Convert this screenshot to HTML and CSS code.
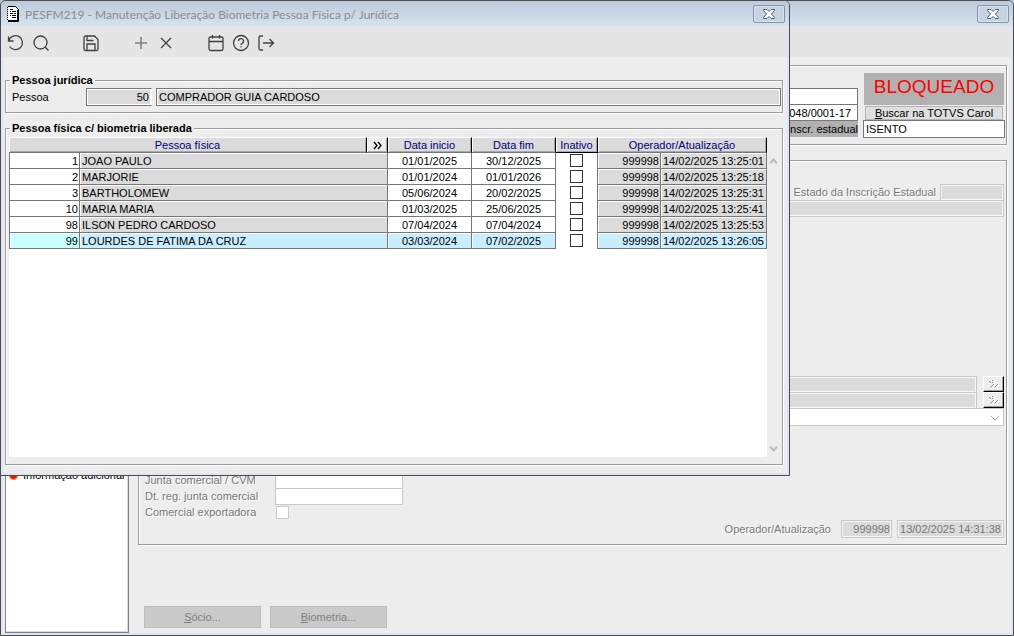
FILE: index.html
```html
<!DOCTYPE html>
<html lang="pt-BR">
<head>
  <meta charset="UTF-8">
  <title>PESFM219 - Manutenção Liberação Biometria Pessoa Física p/ Jurídica</title>
  <link rel="stylesheet" href="styles.css">
</head>
<body>

  <!-- Cadastro de pessoa (janela de fundo) -->
  <div class="window main-window">
    <div class="titlebar">
      <button class="close" type="button" aria-label="Fechar cadastro">
        <svg width="12" height="10" viewBox="0 0 12 10"><path d="M.5.5h3.500L6 2.500l2-2h3.500v1L8.500 5l3 3.500v1H8l-2-2-2 2H.5v-1L3.500 5l-3-3.500z" fill="#fff" stroke="#5c616b"/></svg>
      </button>
    </div>
    <div class="toolbar"></div>
    <div class="main-body">
      <nav class="sidebar">
        <a class="nav-item" href="#"><span class="dot"></span>Informação adicional</a>
      </nav>
      <form class="main-form">
        <fieldset class="group header-group">
          <div class="doc-col">
            <input type="text" class="field" aria-label="Nome">
            <input type="text" class="field cnpj" aria-label="CNPJ" value="048/0001-17">
            <label class="tag" for="inscr">Inscr. estadual</label>
          </div>
          <div class="status-col">
            <div class="status">BLOQUEADO</div>
            <button type="button" class="carol"><u>B</u>uscar na TOTVS Carol</button>
            <input type="text" class="field tall" id="inscr" value="ISENTO">
          </div>
        </fieldset>

        <fieldset class="group detail-group">
          <div class="row state-row">
            <label for="estado">Estado da Inscrição Estadual</label>
            <input type="text" class="field off" id="estado" disabled>
          </div>
          <input type="text" class="field off" aria-label="Descrição do estado" disabled>
          <div class="spacer"></div>
          <div class="lookup">
            <input type="text" class="field off" aria-label="Atividade principal" disabled>
            <button type="button" class="pick" aria-label="Pesquisar atividade principal">
              <svg width="12" height="9" viewBox="0 0 12 9"><path d="M1 1.500h1M2 2.500h1M4 .500h1M4 2.500h1M2.500 7.500l3.500-3.500M6.500 7.500L10 4" stroke="#8a8a8a" fill="none"/><path d="M4 8l3.500-3.500M8 8l3.500-3.500" stroke="#fff" fill="none"/></svg>
            </button>
          </div>
          <div class="lookup">
            <input type="text" class="field off" aria-label="Atividade secundária" disabled>
            <button type="button" class="pick" aria-label="Pesquisar atividade secundária">
              <svg width="12" height="9" viewBox="0 0 12 9"><path d="M1 1.500h1M2 2.500h1M4 .500h1M4 2.500h1M2.500 7.500l3.500-3.500M6.500 7.500L10 4" stroke="#8a8a8a" fill="none"/><path d="M4 8l3.500-3.500M8 8l3.500-3.500" stroke="#fff" fill="none"/></svg>
            </button>
          </div>
          <div class="select-wrap">
            <select class="combo" aria-label="Regime" disabled><option></option></select>
            <svg class="chevron" width="10" height="6" viewBox="0 0 10 6"><path d="M1 1l4 4 4-4" fill="none" stroke="#adadad"/></svg>
          </div>
          <div class="trade">
            <div class="row"><label for="cvm">Junta comercial / CVM</label><input type="text" class="field white" id="cvm" disabled></div>
            <div class="row"><label for="dtreg">Dt. reg. junta comercial</label><input type="text" class="field white" id="dtreg" disabled></div>
            <div class="row"><label for="export">Comercial exportadora</label><input type="checkbox" class="check pale" id="export" disabled></div>
          </div>
          <div class="operator">
            <label for="oper">Operador/Atualização</label>
            <input type="text" class="field off oper-id" id="oper" value="999998" disabled>
            <input type="text" class="field off oper-date" aria-label="Data de atualização" value="13/02/2025 14:31:38" disabled>
          </div>
        </fieldset>

        <div class="actions">
          <button type="button" disabled><u>S</u>ócio...</button>
          <button type="button" disabled><u>B</u>iometria...</button>
        </div>
      </form>
    </div>
  </div>

  <!-- PESFM219 -->
  <div class="window dialog">
    <div class="titlebar">
      <svg class="app-icon" width="12" height="16" viewBox="0 0 12 16">
        <path d="M1 1h7l3 3v11H1z" fill="#fff"/>
        <path d="M.5 1v14" fill="none" stroke="#000" stroke-dasharray="1 1"/>
        <path d="M1 .5h7.500l3 3v12H1" fill="none" stroke="#000"/>
        <path d="M3 3.500h3M3 5.500h1M5 5.500h4M3 7.500h3M7 7.500h2M3 9.500h1M5 9.500h4M5 11.500h4" stroke="#000"/>
        <path d="M10.500 4v12M1 14.500h10" stroke="#000"/>
      </svg>
      <h1>PESFM219 - Manutenção Liberação Biometria Pessoa Física p/ Jurídica</h1>
      <button class="close" type="button" aria-label="Fechar">
        <svg width="12" height="10" viewBox="0 0 12 10"><path d="M.5.5h3.500L6 2.500l2-2h3.500v1L8.500 5l3 3.500v1H8l-2-2-2 2H.5v-1L3.500 5l-3-3.500z" fill="#fff" stroke="#5c616b"/></svg>
      </button>
    </div>

    <div class="toolbar">
      <button type="button" aria-label="Desfazer">
        <svg viewBox="0 0 18 18"><path d="M1.500 2.500v4.500h5M1.800 6.500A7 7 0 1 1 2.600 12.500"/></svg>
      </button>
      <button type="button" aria-label="Pesquisar">
        <svg viewBox="0 0 18 18"><circle cx="8.500" cy="8.500" r="6.500"/><path d="M13.300 13.300L16.500 16.500"/></svg>
      </button>
      <button type="button" class="after-gap" aria-label="Salvar">
        <svg viewBox="0 0 18 18"><path d="M3 2h9.500l3.500 3.500V15a1.500 1.500 0 0 1-1.500 1.500H3.500A1.500 1.500 0 0 1 2 15V3.500A1.500 1.500 0 0 1 3.500 2zM5 2v4.500h6.500M5 16.500V10h8v6.500"/></svg>
      </button>
      <button type="button" class="after-gap dim" aria-label="Incluir">
        <svg viewBox="0 0 18 18"><path d="M9 3v12M3 9h12"/></svg>
      </button>
      <button type="button" aria-label="Excluir">
        <svg viewBox="0 0 18 18"><path d="M4 4l10 10M14 4L4 14"/></svg>
      </button>
      <button type="button" class="after-gap" aria-label="Calendário">
        <svg viewBox="0 0 18 18"><path d="M3.500 3h11A1.500 1.500 0 0 1 16 4.500V15a1.500 1.500 0 0 1-1.500 1.500h-11A1.500 1.500 0 0 1 2 15V4.500A1.500 1.500 0 0 1 3.500 3zM2 7.500h14M5.500 1v3.500M12.500 1v3.500"/></svg>
      </button>
      <button type="button" aria-label="Ajuda">
        <svg viewBox="0 0 18 18"><circle cx="9" cy="9" r="7.500"/><path d="M6.500 7a2.500 2.500 0 1 1 3.600 2.300Q9 9.800 9 11M9 12.300v1.300"/></svg>
      </button>
      <button type="button" aria-label="Sair">
        <svg viewBox="0 0 18 18"><path d="M6 2H3.500A1.500 1.500 0 0 0 2 3.500v11A1.500 1.500 0 0 0 3.500 16H6M6 9h10.500M12.500 5l4 4-4 4"/></svg>
      </button>
    </div>

    <div class="dialog-body">
      <fieldset class="group person-group">
        <legend>Pessoa jurídica</legend>
        <div class="person-row">
          <label for="pessoa">Pessoa</label>
          <input type="text" class="field grey code" id="pessoa" value="50" readonly>
          <input type="text" class="field grey name" aria-label="Nome da pessoa jurídica" value="COMPRADOR GUIA CARDOSO" readonly>
        </div>
      </fieldset>

      <fieldset class="group list-group">
        <legend>Pessoa física c/ biometria liberada</legend>
        <div class="list">
          <div class="sheet">
            <table>
              <colgroup>
                <col class="c-id"><col><col class="c-more"><col class="c-date"><col class="c-date"><col class="c-off"><col class="c-oper"><col class="c-stamp">
              </colgroup>
              <thead>
                <tr>
                  <th colspan="2">Pessoa física</th>
                  <th class="more"><button type="button" aria-label="Mais dados"><svg width="9" height="9" viewBox="0 0 9 9"><path d="M1 1l3 3.500-3 3.500M5 1l3 3.500-3 3.500" fill="none" stroke="#000" stroke-width="1.300"/></svg></button></th>
                  <th>Data inicio</th>
                  <th>Data fim</th>
                  <th class="off-head">Inativo</th>
                  <th colspan="2">Operador/Atualização</th>
                </tr>
              </thead>
              <tbody>
                <tr><td class="num">1</td><td class="ro" colspan="2">JOAO PAULO</td><td class="date">01/01/2025</td><td class="date">30/12/2025</td><td class="tick"><input type="checkbox" class="check" aria-label="Inativo 1"></td><td class="ro num">999998</td><td class="ro">14/02/2025 13:25:01</td></tr>
                <tr><td class="num">2</td><td class="ro" colspan="2">MARJORIE</td><td class="date">01/01/2024</td><td class="date">01/01/2026</td><td class="tick"><input type="checkbox" class="check" aria-label="Inativo 2"></td><td class="ro num">999998</td><td class="ro">14/02/2025 13:25:18</td></tr>
                <tr><td class="num">3</td><td class="ro" colspan="2">BARTHOLOMEW</td><td class="date">05/06/2024</td><td class="date">20/02/2025</td><td class="tick"><input type="checkbox" class="check" aria-label="Inativo 3"></td><td class="ro num">999998</td><td class="ro">14/02/2025 13:25:31</td></tr>
                <tr><td class="num">10</td><td class="ro" colspan="2">MARIA MARIA</td><td class="date">01/03/2025</td><td class="date">25/06/2025</td><td class="tick"><input type="checkbox" class="check" aria-label="Inativo 10"></td><td class="ro num">999998</td><td class="ro">14/02/2025 13:25:41</td></tr>
                <tr><td class="num">98</td><td class="ro" colspan="2">ILSON PEDRO CARDOSO</td><td class="date">07/04/2024</td><td class="date">07/04/2024</td><td class="tick"><input type="checkbox" class="check" aria-label="Inativo 98"></td><td class="ro num">999998</td><td class="ro">14/02/2025 13:25:53</td></tr>
                <tr class="selected"><td class="num">99</td><td class="ro" colspan="2">LOURDES DE FATIMA DA CRUZ</td><td class="date">03/03/2024</td><td class="date">07/02/2025</td><td class="tick"><input type="checkbox" class="check" aria-label="Inativo 99"></td><td class="ro num">999998</td><td class="ro">14/02/2025 13:26:05</td></tr>
              </tbody>
            </table>
          </div>
          <div class="scroll">
            <svg width="9" height="7" viewBox="0 0 9 7"><path d="M1 5.500l3.500-4 3.500 4" fill="none" stroke="#bcbcbc" stroke-width="2"/></svg>
            <svg width="9" height="7" viewBox="0 0 9 7"><path d="M1 1.500l3.500 4 3.500-4" fill="none" stroke="#bcbcbc" stroke-width="2"/></svg>
          </div>
        </div>
      </fieldset>
    </div>
  </div>

</body>
</html>
```
FILE: styles.css
```css
* {
  box-sizing: border-box;
}
body {
  margin: 0;
  height: 100vh;
  overflow: hidden;
  background: #b9c6d6;
  font-family: "Liberation Sans", Arial, sans-serif;
  font-size: 11px;
  line-height: 15px;
  color: #000;
}
button, input, select {
  font: inherit;
  color: inherit;
  margin: 0;
  padding: 0;
  border-radius: 0;
}

/* windows */
.window {
  display: flex;
  flex-direction: column;
  background: #ededed;
  border: 1px solid #4b4b50;
  border-radius: 6px 6px 0 0;
  overflow: hidden;
  box-shadow: inset 0 0 0 2px #dfe6f1;
}
.main-window {
  height: 100vh;
}
.dialog {
  position: absolute;
  top: 0;
  left: 0;
  width: calc(100% - 224px);
  height: calc(100vh - 160px);
}
.titlebar {
  display: flex;
  flex: none;
  align-items: center;
  height: 25px;
  padding: 0 4px 0 6px;
  background: linear-gradient(#bccad9, #d6e3f1);
}
.titlebar h1 {
  margin: 2px 0 0 6px;
  font-family: Lato, "Open Sans", sans-serif;
  font-size: 12px;
  font-weight: normal;
  line-height: 18px;
  color: #8c8c8c;
  white-space: nowrap;
}
.close {
  display: flex;
  align-items: center;
  justify-content: center;
  width: 32px;
  height: 18px;
  margin-left: auto;
  background: #c5d3e2;
  border: 1px solid #8394ab;
  border-radius: 2px;
  box-shadow: inset 0 0 0 1px #d5e1ee;
}
.toolbar {
  display: flex;
  flex: none;
  align-items: center;
  gap: 7px;
  height: 31px;
  padding: 2px 4px 0;
  margin: 0 2px;
  background: #e5e5e5;
}
.toolbar button {
  display: flex;
  width: 18px;
  height: 18px;
  background: none;
  border: none;
}
.toolbar svg {
  width: 18px;
  height: 18px;
  fill: none;
  stroke: #404040;
  stroke-width: 1.3;
}
.toolbar .dim svg {
  stroke: #808080;
  stroke-width: 1.6;
}
.toolbar .after-gap {
  margin-left: 25px;
}

/* groups and fields */
.group {
  min-width: 0;
  margin: 0;
  padding: 0;
  border: 1px solid #9c9c9c;
  box-shadow: 1px 1px 0 #fff, inset 1px 1px 0 #fff;
}
legend {
  margin-left: 4px;
  padding: 0 2px;
  font-weight: bold;
  line-height: 15px;
  background: #ededed;
}
.field {
  display: block;
  width: 100%;
  height: 17px;
  padding: 0 2px;
  border: 1px solid #777;
  background: #fff;
}
.field.tall {
  height: 18px;
}
.field.grey {
  height: 18px;
  background: #dbdbdb;
  box-shadow: inset 0 0 0 1px #fff;
}
.field.off {
  border-color: #c8c8c8;
  background: #dbdbdb;
  box-shadow: inset 0 0 0 1px #f6f6f6;
}
.field.white {
  border-color: #c8c8c8;
}
.check {
  appearance: none;
  display: block;
  width: 13px;
  height: 13px;
  border: 1px solid #333;
  background: #fff;
}
.check.pale {
  border-color: #c8c8c8;
}

/* main window */
.main-body {
  display: flex;
  flex: 1;
  gap: 9px;
  min-height: 0;
  padding: 8px 6px 2px 4px;
}
.sidebar {
  flex: none;
  width: 124px;
  padding: 402px 0 0 3px;
  border: 1px solid #7b828b;
  background: #fff;
  box-shadow: inset -1px -1px 0 #d9d9d9;
}
.nav-item {
  display: flex;
  align-items: center;
  gap: 5px;
  color: #000;
  text-decoration: none;
  white-space: nowrap;
}
.dot {
  width: 9px;
  height: 9px;
  border: 1px solid #ff8a1c;
  border-radius: 50%;
  background: #ee1111;
}
.main-form {
  display: flex;
  flex: 1;
  flex-direction: column;
  min-width: 0;
}
.header-group {
  display: flex;
  gap: 5px;
  height: 80px;
  padding: 7px 1px 0 4px;
}
.doc-col {
  display: flex;
  flex: 1;
  flex-direction: column;
  align-items: flex-end;
  padding-top: 15px;
}
.cnpj {
  margin-top: -1px;
  padding-right: 6px;
  text-align: right;
}
.tag {
  height: 16px;
  padding: 1px 0 0 4px;
  background: #b1b1b1;
}
.status-col {
  width: 142px;
}
.status {
  height: 32px;
  margin: 0 1px 1px;
  font-size: 19px;
  line-height: 27px;
  text-align: center;
  color: #f00;
  background: #b1b1b1;
}
.carol {
  display: block;
  width: 138px;
  height: 14px;
  margin: 0 2px;
  line-height: 12px;
  background: #dfdfdf;
  border: 1px solid #b4b4b4;
}
.detail-group {
  display: flex;
  flex: 1;
  flex-direction: column;
  margin-top: 15px;
  padding: 23px 2px 6px 6px;
  color: #777;
  text-shadow: 1px 1px 0 #fff;
}
.row {
  display: flex;
  align-items: center;
  height: 16px;
}
.row .field {
  flex: none;
}
.state-row {
  justify-content: flex-end;
  gap: 4px;
}
.state-row .field {
  width: 64px;
}
.spacer {
  flex: 1;
}
.lookup {
  display: flex;
  gap: 6px;
  height: 16px;
}
.pick {
  flex: none;
  width: 21px;
  height: 16px;
  background: #ededed;
  border: 1px solid #fff;
  border-right-color: #000;
  border-bottom-color: #000;
  box-shadow: inset -1px -1px 0 #a0a0a0;
}
.pick svg {
  display: block;
  margin: 0 auto;
}
.select-wrap {
  position: relative;
  margin-bottom: 46px;
}
.combo {
  appearance: none;
  display: block;
  width: 100%;
  height: 18px;
  border: 1px solid #c8c8c8;
  background: #fff;
  opacity: 1;
}
.chevron {
  position: absolute;
  top: 7px;
  right: 4px;
}
.trade label {
  width: 130px;
}
.trade .field {
  width: 128px;
}
.trade .check {
  margin-left: 1px;
}
.operator {
  display: flex;
  align-items: center;
  justify-content: flex-end;
}
.operator .field {
  height: 18px;
  padding: 0 1px;
}
.operator .oper-id {
  width: 51px;
  margin: 0 5px 0 10px;
  text-align: right;
}
.operator .oper-date {
  width: 107px;
  text-align: center;
}
.actions {
  display: flex;
  gap: 9px;
  margin: 61px 0 5px 6px;
}
.actions button {
  width: 117px;
  height: 22px;
  color: #808080;
  background: #cacaca;
  border: 1px solid #bcbcbc;
}

/* dialog */
.dialog-body {
  display: flex;
  flex: 1;
  flex-direction: column;
  gap: 8px;
  min-height: 0;
  padding: 16px 6px 10px 4px;
}
.person-row {
  display: flex;
  align-items: center;
  padding: 0 1px 6px 6px;
}
.person-row label {
  flex: none;
  width: 74px;
}
.person-row .code {
  flex: none;
  width: 66px;
  margin-right: 4px;
  text-align: right;
  border-right-color: #fff;
}
.list-group {
  display: flex;
  flex: 1;
  flex-direction: column;
  min-height: 0;
}
.list {
  display: flex;
  flex: 1;
  padding: 1px 3px 7px;
}
.sheet {
  flex: 1;
  background: #fff;
}
.scroll {
  display: flex;
  flex-direction: column;
  align-items: center;
  justify-content: space-between;
  width: 12px;
  padding: 21px 0 5px;
}
table {
  width: 100%;
  table-layout: fixed;
  border-collapse: separate;
  border-spacing: 0;
}
.c-id {
  width: 71px;
}
.c-more {
  width: 21px;
}
.c-date {
  width: 84px;
}
.c-off {
  width: 42px;
}
.c-oper {
  width: 63px;
}
.c-stamp {
  width: 106px;
}
th {
  height: 16px;
  padding: 0;
  font-weight: normal;
  line-height: 14px;
  color: #000080;
  background: #dbdbdb;
  border-top: 1px solid #fff;
  border-right: 1px solid #000;
  border-bottom: 1px solid #777;
  box-shadow: inset 1px 0 0 #fff, inset -1px -1px 0 #a8a8a8;
}
.off-head {
  border-bottom-color: #000;
}
.more button {
  display: flex;
  align-items: center;
  justify-content: center;
  width: 100%;
  height: 14px;
  background: #ededed;
  border: none;
  box-shadow: inset 1px 0 0 #fff, inset -1px -1px 0 #a8a8a8;
}
td {
  height: 16px;
  padding: 2px 2px 0;
  line-height: 13px;
  white-space: nowrap;
  border-right: 1px solid #777;
  border-bottom: 1px solid #777;
}
td:first-child {
  border-left: 1px solid #777;
}
.ro {
  background: #dbdbdb;
  box-shadow: inset 1px 1px 0 #fff;
}
.num {
  padding-right: 1px;
  text-align: right;
}
.date {
  text-align: center;
}
.tick {
  padding-top: 1px;
  border-bottom: none;
  vertical-align: top;
}
.tick .check {
  margin: 0 auto;
}
.selected td {
  background: #c8eeff;
  box-shadow: inset 1px 1px 0 #fff;
}
.selected td:first-child {
  background: #c8ffff;
}
.selected .tick {
  background: #fff;
}
```
